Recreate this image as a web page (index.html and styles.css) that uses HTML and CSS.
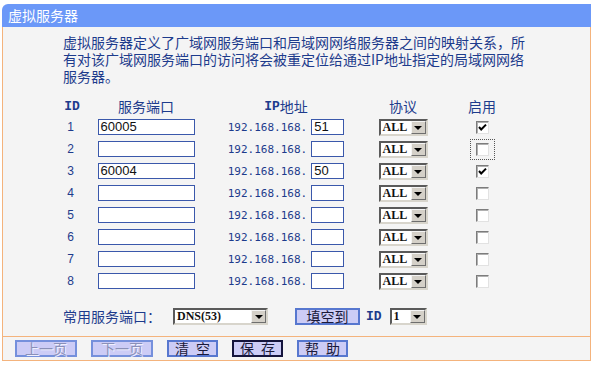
FILE: index.html
```html
<!DOCTYPE html>
<html lang="zh-CN">
<head>
    <meta charset="UTF-8">
    <title>虚拟服务器</title>
    <link rel="stylesheet" href="styles.css">
</head>
<body>
    <div class="panel">
        <div class="panel-title">虚拟服务器</div>
        <div class="panel-body">
            <p class="intro">虚拟服务器定义了广域网服务端口和局域网网络服务器之间的映射关系，所有对该广域网服务端口的访问将会被重定位给通过IP地址指定的局域网网络服务器。</p>

            <div class="port-table">
                <div class="cell head mono">ID</div>
                <div class="cell head">服务端口</div>
                <div class="cell head"><span class="mono">IP</span>地址</div>
                <div class="cell head">协议</div>
                <div class="cell head">启用</div>

                <!-- row 1 -->
                <div class="cell num">1</div>
                <div class="cell"><div class="field port">60005</div></div>
                <div class="cell"><span class="ip-prefix">192.168.168.</span><div class="field ip">51</div></div>
                <div class="cell"><div class="select proto"><span class="select-val">ALL</span><span class="select-btn"><i></i></span></div></div>
                <div class="cell"><div class="chk checked"><svg viewBox="0 0 11 11" width="11" height="11"><polyline points="2,5 4.2,7.5 9,2.6" fill="none" stroke="#000" stroke-width="2"/></svg></div></div>

                <!-- row 2 -->
                <div class="cell num">2</div>
                <div class="cell"><div class="field port"></div></div>
                <div class="cell"><span class="ip-prefix">192.168.168.</span><div class="field ip"></div></div>
                <div class="cell"><div class="select proto"><span class="select-val">ALL</span><span class="select-btn"><i></i></span></div></div>
                <div class="cell"><div class="focus-ring"><div class="chk"></div></div></div>

                <!-- row 3 -->
                <div class="cell num">3</div>
                <div class="cell"><div class="field port">60004</div></div>
                <div class="cell"><span class="ip-prefix">192.168.168.</span><div class="field ip">50</div></div>
                <div class="cell"><div class="select proto"><span class="select-val">ALL</span><span class="select-btn"><i></i></span></div></div>
                <div class="cell"><div class="chk checked"><svg viewBox="0 0 11 11" width="11" height="11"><polyline points="2,5 4.2,7.5 9,2.6" fill="none" stroke="#000" stroke-width="2"/></svg></div></div>

                <!-- row 4 -->
                <div class="cell num">4</div>
                <div class="cell"><div class="field port"></div></div>
                <div class="cell"><span class="ip-prefix">192.168.168.</span><div class="field ip"></div></div>
                <div class="cell"><div class="select proto"><span class="select-val">ALL</span><span class="select-btn"><i></i></span></div></div>
                <div class="cell"><div class="chk"></div></div>

                <!-- row 5 -->
                <div class="cell num">5</div>
                <div class="cell"><div class="field port"></div></div>
                <div class="cell"><span class="ip-prefix">192.168.168.</span><div class="field ip"></div></div>
                <div class="cell"><div class="select proto"><span class="select-val">ALL</span><span class="select-btn"><i></i></span></div></div>
                <div class="cell"><div class="chk"></div></div>

                <!-- row 6 -->
                <div class="cell num">6</div>
                <div class="cell"><div class="field port"></div></div>
                <div class="cell"><span class="ip-prefix">192.168.168.</span><div class="field ip"></div></div>
                <div class="cell"><div class="select proto"><span class="select-val">ALL</span><span class="select-btn"><i></i></span></div></div>
                <div class="cell"><div class="chk"></div></div>

                <!-- row 7 -->
                <div class="cell num">7</div>
                <div class="cell"><div class="field port"></div></div>
                <div class="cell"><span class="ip-prefix">192.168.168.</span><div class="field ip"></div></div>
                <div class="cell"><div class="select proto"><span class="select-val">ALL</span><span class="select-btn"><i></i></span></div></div>
                <div class="cell"><div class="chk"></div></div>

                <!-- row 8 -->
                <div class="cell num">8</div>
                <div class="cell"><div class="field port"></div></div>
                <div class="cell"><span class="ip-prefix">192.168.168.</span><div class="field ip"></div></div>
                <div class="cell"><div class="select proto"><span class="select-val">ALL</span><span class="select-btn"><i></i></span></div></div>
                <div class="cell"><div class="chk"></div></div>
            </div>

            <div class="common-row">
                <span class="common-label">常用服务端口：</span>
                <div class="select common"><span class="select-val">DNS(53)</span><span class="select-btn"><i></i></span></div>
                <button class="btn fill-btn">填空到</button>
                <span class="mono id-label">ID</span>
                <div class="select id-sel"><span class="select-val">1</span><span class="select-btn"><i></i></span></div>
            </div>

            <div class="footer">
                <button class="btn btn-wide" disabled>上一页</button>
                <button class="btn btn-wide" disabled>下一页</button>
                <button class="btn spaced">清 空</button>
                <button class="btn spaced btn-focus">保 存</button>
                <button class="btn spaced">帮 助</button>
            </div>
        </div>
    </div>
</body>
</html>
```

FILE: styles.css
```css
:root {
    --title-blue: #6b98f8;
    --text-blue: #1d3b8c;
    --orange: #f4b37c;
    --panel-bg: #f4f4f4;
    --btn-bg: #ccccf6;
    --btn-border: #5777cf;
    --field-border: #3a58ab;
}

* {
    margin: 0;
    padding: 0;
    box-sizing: border-box;
}

body {
    background: #ffffff;
    font-family: "Noto Sans CJK SC", "Liberation Sans", sans-serif;
    font-size: 14px;
    color: var(--text-blue);
}

.panel {
    margin: 4px 2px 0;
}

.panel-title {
    height: 23px;
    line-height: 23px;
    padding-left: 6px;
    background: var(--title-blue);
    color: #ffffff;
    border-top-left-radius: 6px;
}

.panel-body {
    background: var(--panel-bg);
    border-left: 1px solid var(--orange);
    border-right: 1px solid var(--orange);
    border-bottom: 1px solid var(--orange);
}

.intro {
    width: 530px;
    padding: 7px 0 0 60px;
    line-height: 17px;
}

.mono {
    font-family: "Liberation Mono", monospace;
    font-weight: bold;
    font-size: 13px;
}

.port-table {
    display: grid;
    grid-template-columns: 32px 116px 164px 70px 88px;
    grid-auto-rows: 22px;
    margin: 9px 0 0 53px;
}

.cell {
    display: flex;
    align-items: center;
    justify-content: center;
}

.cell.head {
    height: 24px;
}

.cell.num {
    font-family: "Liberation Sans", sans-serif;
    font-size: 12px;
    padding-right: 3px;
}

.field {
    height: 16px;
    background: #ffffff;
    border: 1px solid var(--field-border);
    font-family: "Liberation Sans", sans-serif;
    font-size: 13px;
    line-height: 14px;
    color: #111111;
    padding-left: 2px;
}

.field.port {
    width: 97px;
}

.field.ip {
    width: 33px;
}

.ip-prefix {
    font-family: "DejaVu Sans Mono", monospace;
    font-size: 11px;
    margin-right: 4px;
}

.select {
    display: flex;
    height: 17px;
    background: #ffffff;
    border: 2px solid;
    border-color: #5a5a5a #d8d5cc #d8d5cc #5a5a5a;
}

.select-val {
    flex: 1;
    font-family: "Liberation Serif", serif;
    font-weight: bold;
    font-size: 12px;
    line-height: 13px;
    color: #111111;
    padding-left: 2px;
}

.select-btn {
    width: 15px;
    display: flex;
    align-items: center;
    justify-content: center;
    background: #d4d0c8;
    border: 1px solid;
    border-color: #f4f4f4 #6e6e6e #6e6e6e #f4f4f4;
}

.select-btn i {
    width: 0;
    height: 0;
    border-left: 4px solid transparent;
    border-right: 4px solid transparent;
    border-top: 4px solid #000000;
    margin-top: 1px;
}

.select.proto {
    width: 49px;
}

.select.common {
    width: 95px;
}

.select.id-sel {
    width: 37px;
}

.chk {
    width: 13px;
    height: 13px;
    background: #ffffff;
    border: 1px solid;
    border-color: #7c7c7c #e2e2e2 #e2e2e2 #7c7c7c;
    box-shadow: inset 1px 1px 0 #b0b0b0;
    display: flex;
    align-items: center;
    justify-content: center;
}

.focus-ring {
    padding: 3px 5px;
    border: 1px dotted #555555;
}

.common-row {
    display: flex;
    align-items: center;
    height: 20px;
    margin-top: 14px;
    padding-left: 60px;
}

.common-label {
    margin-right: 12px;
}

.btn {
    height: 17px;
    width: 51px;
    background: var(--btn-bg);
    border: 2px solid var(--btn-border);
    font-family: "Noto Sans CJK SC", sans-serif;
    font-size: 14px;
    line-height: 13px;
    color: #1a1a3a;
    white-space: nowrap;
}

.btn.spaced {
    white-space: pre;
    letter-spacing: 2px;
    text-indent: 2px;
}

.btn-wide {
    width: 62px;
}

.btn:disabled {
    color: #8a90b8;
    text-shadow: 1px 1px 0 #f0f0ff;
    border-color: #7590dc;
}

.btn-focus {
    border-color: #14143c;
}

.fill-btn {
    width: 65px;
    margin-left: 27px;
}

.id-label {
    margin: 0 8px 0 6px;
    color: var(--text-blue);
}

.footer {
    display: flex;
    gap: 14px;
    margin-top: 10px;
    padding: 3px 0 3px 12px;
    border-top: 1px solid var(--orange);
}
```
